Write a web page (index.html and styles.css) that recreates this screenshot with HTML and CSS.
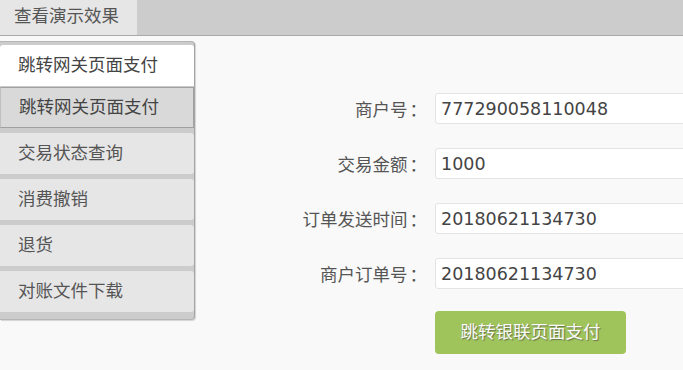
FILE: index.html
```html
<!DOCTYPE html>
<html lang="zh">
<head>
<meta charset="utf-8">
<title>查看演示效果</title>
<link rel="stylesheet" href="styles.css">
</head>
<body>
<div class="topbar"><div class="tab">查看演示效果</div></div>
<div class="main">
  <div class="panel">
    <div class="panel-head">跳转网关页面支付</div>
    <div class="item active">跳转网关页面支付</div>
    <div class="item">交易状态查询</div>
    <div class="item">消费撤销</div>
    <div class="item">退货</div>
    <div class="item">对账文件下载</div>
  </div>
  <form class="form">
    <label class="label">商户号<span class="colon">：</span></label><div class="input">777290058110048</div>
    <label class="label">交易金额<span class="colon">：</span></label><div class="input">1000</div>
    <label class="label">订单发送时间<span class="colon">：</span></label><div class="input">20180621134730</div>
    <label class="label">商户订单号<span class="colon">：</span></label><div class="input">20180621134730</div>
    <span></span><div class="btn">跳转银联页面支付</div>
  </form>
</div>
</body>
</html>
```
FILE: styles.css
```css
html, body { margin: 0; padding: 0; }
body {
  width: 683px; height: 370px; overflow: hidden;
  background: #f9f9f9;
  font-family: "DejaVu Sans", "Noto Sans CJK SC", sans-serif;
  font-size: 17.5px; color: #555;
}
.topbar {
  height: 35px; background: #cccccc;
  border-bottom: 1px solid #a9a9a9;
  display: flex;
}
.tab {
  width: 123px; padding-left: 14px;
  background: #e6e6e6; line-height: 33px;
}
.main { display: flex; align-items: flex-start; margin-top: 5px; }
.panel {
  width: 194px; flex: none;
  background: #cccccc;
  border: 1px solid #b5b5b5; border-left: none;
  border-right-color: #a5a5a5;
  border-radius: 0 4px 4px 0;
  padding: 3px 0 7px;
  box-shadow: 1px 1px 1px rgba(0,0,0,0.15);
  display: flex; flex-direction: column; gap: 5px;
}
.panel-head {
  height: 41px; line-height: 41px;
  padding-left: 18px; background: #fff;
  border-radius: 3px 3px 0 0;
  color: #444;
  margin-bottom: -4px;
}
.item {
  height: 41px; line-height: 41px;
  padding-left: 18px; background: #e6e6e6;
  border-radius: 0 3px 3px 0;
}
.item.active {
  background: #d9d9d9; height: 39px; line-height: 39px;
  border: 1px solid #a0a0a0; border-left-color: #c0c0c0;
  border-radius: 0;
  color: #444;
}
.form {
  margin: 52px 0 0 0;
  display: grid;
  grid-template-columns: 240px 300px;
  row-gap: 24px; column-gap: 0;
  align-items: center;
}
.label { text-align: right; padding-right: 8px; }
.colon { font-family: "Noto Sans CJK TC", sans-serif; margin-left: 2px; }
.input {
  height: 31px; line-height: 31px; box-sizing: border-box;
  background: #fff; border: 1px solid #e4e4e4; border-radius: 3px;
  padding-left: 5px; color: #444;
}
.btn {
  width: 191px; height: 43px; line-height: 43px;
  margin-top: -2px;
  background: #a0c45c; border-radius: 4px;
  color: #fafafa; text-align: center;
  text-shadow: 1px 1px 1px rgba(60,60,60,0.6);
}
```
